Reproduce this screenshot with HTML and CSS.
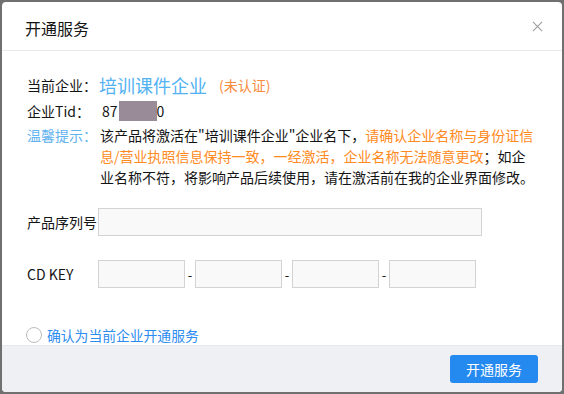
FILE: index.html
```html
<!DOCTYPE html>
<html lang="zh-CN">
<head>
    <meta charset="UTF-8">
    <title>开通服务</title>
    <link rel="stylesheet" href="styles.css">
</head>
<body>
    <div class="modal">
        <div class="modal-header">
            <div class="modal-title">开通服务</div>
            <svg class="close-icon" viewBox="0 0 12 12">
                <path d="M1 1L11 11M11 1L1 11"/>
            </svg>
        </div>

        <div class="modal-body">
            <div class="info-row">
                <span class="info-label">当前企业：</span>
                <span class="company-name">培训课件企业</span>
                <span class="unverified">(未认证)</span>
            </div>
            <div class="info-row">
                <span class="info-label">企业Tid：</span>
                <span class="tid">87<span class="mask"></span>0</span>
            </div>
            <div class="tips">
                <span class="tips-label">温馨提示：</span>
                <p class="tips-text">该产品将激活在"培训课件企业"企业名下，<span class="warn">请确认企业名称与身份证信息/营业执照信息保持一致，一经激活，企业名称无法随意更改</span>；如企业名称不符，将影响产品后续使用，请在激活前在我的企业界面修改。</p>
            </div>

            <div class="form-row serial-row">
                <label class="form-label">产品序列号</label>
                <input class="input serial-input" type="text">
            </div>
            <div class="form-row key-row">
                <label class="form-label">CD KEY</label>
                <input class="input key-input" type="text">
                <span class="dash">-</span>
                <input class="input key-input" type="text">
                <span class="dash">-</span>
                <input class="input key-input" type="text">
                <span class="dash">-</span>
                <input class="input key-input" type="text">
            </div>

            <label class="confirm">
                <span class="radio"></span>
                确认为当前企业开通服务
            </label>
        </div>

        <div class="modal-footer">
            <button class="submit-btn">开通服务</button>
        </div>
    </div>
</body>
</html>
```

FILE: styles.css
```css
* {
    margin: 0;
    padding: 0;
    box-sizing: border-box;
}

body {
    font-family: "Noto Sans CJK SC", "Noto Sans", sans-serif;
    font-size: 14px;
    color: #141414;
    background: #707070;
    padding: 2px;
    width: 564px;
    height: 394px;
    overflow: hidden;
}

.modal {
    width: 560px;
    height: 390px;
    background: #ffffff;
    border-radius: 4px;
    display: flex;
    flex-direction: column;
    overflow: hidden;
}

.modal-header {
    height: 49px;
    flex-shrink: 0;
    border-bottom: 1px solid #e8eaec;
    display: flex;
    align-items: center;
    justify-content: space-between;
    padding: 0 19px 0 23px;
}

.modal-title {
    font-size: 16px;
    line-height: 20px;
    padding-top: 4px;
    color: #141414;
}

.close-icon {
    width: 11px;
    height: 11px;
    stroke: #9a9a9a;
    stroke-width: 1.1;
    fill: none;
}

.modal-body {
    flex: 1;
    padding: 21px 20px 0 25px;
}

.info-row {
    display: flex;
    align-items: center;
    height: 26px;
}

.info-label,
.tips-label {
    width: 73px;
    flex-shrink: 0;
    line-height: 21px;
}

.company-name {
    font-size: 18px;
    color: #52b2f2;
    margin-left: -1px;
}

.unverified {
    margin-left: 12px;
    font-size: 14px;
    color: #fa8a3c;
}

.tid {
    display: flex;
    align-items: center;
    margin-left: 2px;
}

.mask {
    display: inline-block;
    width: 38px;
    height: 20px;
    background: #9a8b99;
    margin-left: 1px;
}

.tips {
    display: flex;
    margin-top: 1px;
}

.tips-label {
    color: #5fb3ee;
}

.tips-text {
    line-height: 21px;
    width: 434px;
}

.warn {
    color: #ff8a22;
}

.form-row {
    display: flex;
    align-items: center;
}

.serial-row {
    margin-top: 20px;
}

.key-row {
    margin-top: 24px;
}

.form-label {
    width: 71px;
    flex-shrink: 0;
}

.input {
    height: 28px;
    background: #f9f9f9;
    border: 1px solid #d3d3d3;
    outline: none;
}

.serial-input {
    width: 384px;
}

.key-input {
    width: 87px;
}

.dash {
    width: 10px;
    text-align: center;
    font-size: 13px;
}

.confirm {
    display: flex;
    align-items: center;
    margin-top: 37px;
    margin-left: -1px;
    color: #2d8cf0;
    line-height: 20px;
    font-size: 13.8px;
}

.radio {
    width: 16px;
    height: 16px;
    border: 1px solid #bdbdbd;
    border-radius: 50%;
    margin-right: 5px;
}

.modal-footer {
    height: 47px;
    flex-shrink: 0;
    background: #eff0f4;
    border-top: 1px solid #e6e8ec;
    display: flex;
    justify-content: flex-end;
    align-items: flex-start;
    padding: 9px 24px 0 0;
}

.submit-btn {
    width: 88px;
    height: 28px;
    background: #248af0;
    color: #ffffff;
    border: none;
    border-radius: 3px;
    font-family: inherit;
    font-size: 14px;
    cursor: pointer;
}
```
